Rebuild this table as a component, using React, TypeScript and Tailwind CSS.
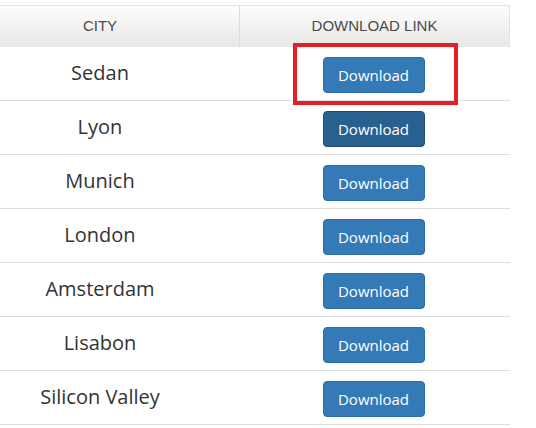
import React from "react";

const cities = ["Sedan", "Lyon", "Munich", "London", "Amsterdam", "Lisabon", "Silicon Valley"];

export default function App() {
  return (
    <div className="relative w-[536px] h-[428px] bg-white overflow-hidden">
      <div className="pt-[5px] w-[510px]">
        <div
          className="flex h-[42px] border-t border-r border-[#e2e2e2] bg-gradient-to-b from-[#fdfdfd] to-[#e9e7e5] text-[15px] text-[#4a4a4a] uppercase"
          style={{ fontFamily: '"Liberation Sans", Arial, sans-serif' }}
        >
          <div className="w-[240px] pr-[39px] flex items-center justify-center border-r border-[#dcdcdc]">City</div>
          <div className="flex-1 flex items-center justify-center">Download Link</div>
        </div>
        {cities.map((c, i) => (
          <div
            key={c}
            className="flex h-[54px] border-b border-[#dddddd]"
            style={{ fontFamily: '"Open Sans", sans-serif' }}
          >
            <div className="w-[240px] pr-[40px] pt-[11px] flex justify-center text-[20px] text-[#333] leading-[30px]">
              {c}
            </div>
            <div className="flex-1 pt-[10px] pr-[3px] flex justify-center">
              <button
                className={`w-[102px] h-[36px] rounded-[4px] border text-[15px] text-white leading-none ${
                  i === 1 ? "bg-[#286090] border-[#204d74]" : "bg-[#337ab7] border-[#2e6da4]"
                }`}
              >
                Download
              </button>
            </div>
          </div>
        ))}
      </div>
      <div className="absolute left-[293px] top-[43px] w-[165px] h-[62px] border-[4px] border-[#e61e28]" />
    </div>
  );
}
